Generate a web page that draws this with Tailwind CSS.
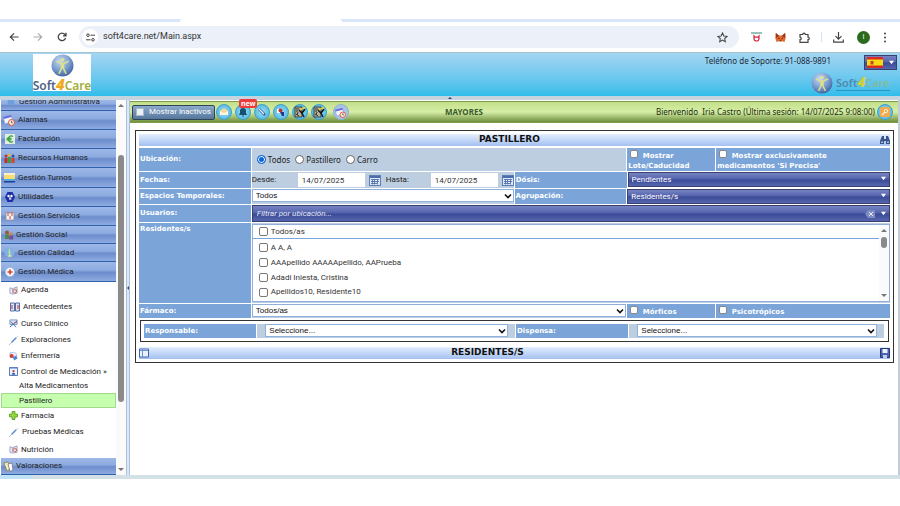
<!DOCTYPE html>
<html lang="es">
<head>
    <meta charset="UTF-8">
    <meta name="viewport" content="width=device-width, initial-scale=1.0">
    <title>Soft4Care - Pastillero</title>

    <!-- Tailwind CSS -->
    <script src="https://cdn.jsdelivr.net/npm/@tailwindcss/browser@4"></script>

    <style>
        /* Fuentes: menú y listas con Roboto, formulario con DejaVu Sans */
        body { font-family: Roboto, 'Open Sans', sans-serif; }
        .verdana { font-family: 'DejaVu Sans', sans-serif; }
        .noto { font-family: 'Noto Sans', sans-serif; }
        .arial { font-family: 'Liberation Sans', Arial, sans-serif; }
        /* Botones del menú lateral */
        .menu {
            background: linear-gradient(#9db8e8 0%, #8eabe0 42%, #6c8dcc 55%, #8fabe1 100%);
            border-bottom: 1px solid #2f62ad;
        }
        .titlebar { background: linear-gradient(#e4eefd, #c3d7f8 50%, #a3c0ef); }
        .combo {
            background: linear-gradient(#7583c2 0%, #5a69b0 40%, #3c4b97 55%, #5666b0 100%);
            border: 1px solid #39406b;
        }
        .tool {
            border: 1px solid #3f9fc4;
            background: radial-gradient(circle, #a8dcf4, #3bb0e0);
        }
    </style>
</head>
<body class="flex min-h-screen flex-col bg-white pt-[19px] text-[8px] text-[#222]">

    <!-- Iconos compartidos -->
    <svg class="absolute size-0">
        <defs>
            <radialGradient id="ball" cx=".4" cy=".3" r=".8">
                <stop offset="0" stop-color="#c9dcf2"/><stop offset=".6" stop-color="#6f94c8"/><stop offset="1" stop-color="#35518f"/>
            </radialGradient>
        </defs>
        <symbol id="chevron" viewBox="0 0 8 8"><path d="M1 2.500l3 3 3-3" fill="none" stroke="#111" stroke-width="1.600"/></symbol>
        <symbol id="calendar" viewBox="0 0 12 11">
            <rect x=".5" y=".5" width="11" height="10" fill="#dfe8f7" stroke="#5f7cb4"/>
            <path d="M1 2h10" stroke="#4c6cae" stroke-width="2"/>
            <path d="M2 4.500h8M2 6.500h8M2 8.500h6M3.500 4v5.500M5.500 4v5.500M8.500 4v5.500" stroke="#5670a6" stroke-width=".9"/>
        </symbol>
        <symbol id="card" viewBox="0 0 10 10">
            <path d="M1 2l3 .8L9 1v7l-5 1-3-1z" fill="#e6ecf8" stroke="#8290b4" stroke-width=".8"/>
            <path d="M4 3v5" stroke="#8290b4" stroke-width=".7"/>
            <circle cx="6.500" cy="5.500" r="2" fill="#fff" stroke="#d04a4a" stroke-width=".9"/>
            <path d="M6.500 4.500v1h1" fill="none" stroke="#444" stroke-width=".5"/>
        </symbol>
        <symbol id="alarm" viewBox="0 0 12 12">
            <path d="M0 3l8-2 2 6-8 3z" fill="#f4f6ff" stroke="#8c9ad8" stroke-width=".7"/>
            <path d="M0 3l8-2 .6 2L.7 5z" fill="#6a6fd8"/>
            <circle cx="8.500" cy="8.500" r="3" fill="#fde9dc" stroke="#d8583a" stroke-width="1"/>
            <path d="M8.500 6.800v1.900h1.300" fill="none" stroke="#333" stroke-width=".7"/>
        </symbol>
        <symbol id="needle" viewBox="0 0 10 10">
            <path d="M0 10l4-4" stroke="#8aa6c9" stroke-width=".8"/>
            <path d="M3 7l5-5" stroke="#5b8fd0" stroke-width="1.800"/>
            <path d="M8 2l1.700-1.700" stroke="#9cb8dc"/>
        </symbol>
        <symbol id="doctor" viewBox="0 0 12 12">
            <path d="M1 1h7v10H1z" fill="#b9b39a" stroke="#222" stroke-width=".8"/>
            <path d="M2 3h3M2 5h2M2 8l3 2M3 9l1-3" stroke="#222" stroke-width=".9"/>
            <path d="M5 4l3 3 3-4" fill="none" stroke="#111" stroke-width="1.500"/>
            <path d="M6 4l4-2.500 1 1" fill="none" stroke="#f2d52e" stroke-width="1.300"/>
            <path d="M8 7l2 4" stroke="#123" stroke-width="1.500"/>
        </symbol>
        <symbol id="globe" viewBox="0 0 22 22">
            <circle cx="11" cy="11" r="10.500" fill="url(#ball)"/>
            <circle cx="11" cy="5.500" r="1.700" fill="#dfe391"/>
            <path d="M5 7l4.500 2h3L17 7M10 9v5l-2.500 5M12 9v5l2.500 5M11 9v5" fill="none" stroke="#dbe08c" stroke-width="1.500"/>
        </symbol>
    </svg>

    <!-- Barra de pestañas del navegador -->
    <div class="flex h-[3px] bg-[#d9e5f8]">
        <div class="ml-[20%] h-[3px] w-[18%] rounded-t bg-white"></div>
    </div>

    <!-- Barra de direcciones -->
    <div class="flex h-[30px] items-center bg-white pl-[9px] pr-[13px]">
        <div class="flex w-[70px] items-center gap-[14px]">
            <button aria-label="Atrás"><svg class="size-[10px]" viewBox="0 0 10 10" fill="none" stroke="#444" stroke-width="1.200"><path d="M9.500 5H1.500M5 1.300L1.300 5 5 8.700"/></svg></button>
            <button aria-label="Adelante"><svg class="size-[10px]" viewBox="0 0 10 10" fill="none" stroke="#aaa" stroke-width="1.200"><path d="M.5 5h8M5 1.300L8.700 5 5 8.700"/></svg></button>
            <button aria-label="Recargar"><svg class="size-[10px]" viewBox="0 0 10 10" fill="none" stroke="#444" stroke-width="1.300"><path d="M8.500 6A3.700 3.700 0 1 1 7.800 2.500L9 3.700M9 .8v3H6"/></svg></button>
        </div>
        <div class="flex h-[22px] flex-1 items-center rounded-full bg-[#ebf0f9] pl-[3px] pr-[11px]">
            <span class="flex size-[16px] items-center justify-center rounded-full bg-white">
                <svg class="size-[9px]" viewBox="0 0 9 9" fill="none" stroke="#444" stroke-width="1"><circle cx="2" cy="2.200" r="1.300"/><path d="M4.500 2.200H9M0 6.800h4.500"/><circle cx="7" cy="6.800" r="1.300"/></svg>
            </span>
            <input type="text" aria-label="Dirección" value="soft4care.net/Main.aspx" class="ml-[5px] flex-1 bg-transparent text-[9px] text-[#333] outline-none">
            <button aria-label="Favorito"><svg class="size-[11px]" viewBox="0 0 12 12" fill="none" stroke="#444" stroke-width="1.100"><path d="M6 1l1.500 3.300 3.500.4-2.600 2.400.7 3.600L6 8.900l-3.100 1.800.7-3.600L1 4.700l3.500-.4z"/></svg></button>
        </div>
        <div class="ml-[12px] flex items-center gap-[13px]">
            <svg class="size-[11px]" viewBox="0 0 11 11"><path d="M0 1h11" stroke="#4f9a83" stroke-width="1.200"/><path d="M3 4v2.500a2.500 2.500 0 0 0 5 0V4l-1 1.200H4z" fill="#fff" stroke="#d4273e" stroke-width="1.200"/></svg>
            <svg class="size-[11px]" viewBox="0 0 11 11"><path d="M.5 1l4 2.500h2l4-2.500.2 5-1.200 4-3-1h-2l-3 1L.3 6z" fill="#e8682c"/><path d="M1 1l3 3-3 2zM10 1L7 4l3 2z" fill="#8a3a22"/><path d="M3 6l1.500.7M8 6l-1.500.7M4.500 9h2" stroke="#3a2018" stroke-width=".9"/></svg>
            <svg class="size-[11px]" viewBox="0 0 11 11" fill="none" stroke="#444" stroke-width="1.200"><path d="M1 2.500h2.700a1.300 1.300 0 0 1 2.600 0H9v2.700a1.200 1.200 0 0 1 0 2.500v2.700H1V7.700a1.200 1.200 0 0 0 0-2.500z"/></svg>
            <span class="-mx-[2px] h-[10px] w-px bg-[#d3e0f5]"></span>
            <svg class="size-[11px]" viewBox="0 0 11 11" fill="none" stroke="#444" stroke-width="1.200"><path d="M5.500 0v7M2.500 4.200l3 3 3-3M.7 7.500v2.700h9.600V7.500"/></svg>
            <span class="flex size-[13px] items-center justify-center rounded-full bg-[#2c6a1d] text-[7px] text-white">I</span>
            <svg class="h-[11px] w-[4px]" viewBox="0 0 4 11" fill="#444"><circle cx="2" cy="1.500" r="1"/><circle cx="2" cy="5.500" r="1"/><circle cx="2" cy="9.500" r="1"/></svg>
        </div>
    </div>

    <!-- Cabecera -->
    <header class="flex h-[44px] items-start justify-between border-t border-[#a9c3cf] bg-linear-to-b from-[#a3d5f3] to-[#2dbdea] pr-[3px]">
        <div class="ml-[33px] mt-px flex h-[37px] w-[58px] flex-col items-center bg-white">
            <svg class="size-[23px] shrink-0"><use href="#globe"/></svg>
            <span class="noto flex items-baseline text-[12px] leading-[14px] font-semibold text-[#4f6286]">Soft<b class="text-[15px] leading-[14px] italic text-[#f0a81e]">4</b><span class="text-[#a3ad3b]">Care</span></span>
        </div>
        <div class="flex flex-col items-end">
            <div class="flex items-start gap-[33px]">
                <span class="noto pt-[2px] text-[8px] leading-[12px] text-[#1c2a33]">Teléfono de Soporte: 91-088-9891</span>
                <button aria-label="Idioma" class="combo mt-[2px] flex h-[15px] w-[33px] items-center justify-between px-[2px]">
                    <svg class="h-[11px] w-[16px]" viewBox="0 0 16 11"><path d="M0 0h16v11H0z" fill="#d82c20"/><path d="M0 2.500h16v6H0z" fill="#fbd912"/><path d="M3.500 4h3v3.500h-3z" fill="#c0492a"/></svg>
                    <svg class="size-[5px]" viewBox="0 0 6 6"><path d="M0 1h6L3 5z" fill="#fff"/></svg>
                </button>
            </div>
            <div class="mt-[2px] mr-[7px] flex items-center gap-[3px]">
                <svg class="size-[22px]"><use href="#globe"/></svg>
                <span class="noto flex items-baseline border-b border-[#2a92c4] text-[11px] leading-[14px] font-semibold text-[#5586ae]">Soft<b class="text-[14px] leading-[14px] italic text-[#d6cf3a]">4</b><span class="text-[#86bb9c]">Care</span></span>
            </div>
        </div>
    </header>
    <div class="flex h-[4px] items-center justify-center bg-[#c5d5df]">
        <svg class="h-[2px] w-[4px]" viewBox="0 0 4 2"><path d="M0 2l2-2 2 2z" fill="#26466e"/></svg>
    </div>

    <div class="flex border-r-2 border-[#c3cdd8]">
        <!-- Menú lateral -->
        <nav class="ml-px flex w-[115px] shrink-0 flex-col">
            <a href="#" class="menu flex h-[11px] items-end gap-[4px] overflow-hidden pl-[6px]"><svg class="mb-[4px] size-[8px]" viewBox="0 0 8 8"><circle cx="4" cy="4" r="3.500" fill="#6ea0dd"/></svg><span class="mb-[3px] leading-[11px]">Gestión Administrativa</span></a>
            <a href="#" class="menu flex h-[19px] items-center gap-[3px] pl-[2px]"><svg class="size-[12px]"><use href="#alarm"/></svg>Alarmas</a>
            <a href="#" class="menu flex h-[19px] items-center gap-[3px] pl-[4px]"><svg class="size-[10px]" viewBox="0 0 10 10"><path d="M0 0h10v10H0z" fill="#dff0df"/><path d="M8 2.500A3 3 0 1 0 8 7.500M1.500 4.300h5M1.500 5.800h5" fill="none" stroke="#3a9e40" stroke-width="1.300"/></svg>Facturación</a>
            <a href="#" class="menu flex h-[19px] items-center gap-[3px] pl-[3px]"><svg class="size-[11px]" viewBox="0 0 11 11"><circle cx="2" cy="3" r="1.500" fill="#c52f25"/><path d="M.5 5h3v5h-3z" fill="#c52f25"/><circle cx="5.500" cy="2" r="1.500" fill="#e8b62b"/><path d="M4 4h3v6H4z" fill="#3d9a45"/><circle cx="9" cy="3" r="1.500" fill="#2a4fa8"/><path d="M7.500 5h3v5h-3z" fill="#d2452c"/></svg>Recursos Humanos</a>
            <a href="#" class="menu flex h-[20px] items-center gap-[3px] pl-[3px]"><svg class="size-[11px]" viewBox="0 0 11 11"><path d="M0 1h11v6H0z" fill="#f7dc74"/><path d="M0 1h11v2H0z" fill="#f9efcb"/><path d="M0 7h11v1.500H0z" fill="#4bb1da"/><path d="M0 9h11v1.500H0z" fill="#1f3f9a"/></svg>Gestión Turnos</a>
            <a href="#" class="menu flex h-[19px] items-center gap-[3px] pl-[4px]"><svg class="size-[10px]" viewBox="0 0 10 10"><path d="M2.500 0h5L10 5l-2.500 5h-5L0 5z" fill="#1d2fa6"/><circle cx="3.500" cy="4" r="1.200" fill="#fff"/><circle cx="6.500" cy="4" r="1.200" fill="#fff"/><path d="M4 7h2.500M5 5v2" stroke="#fff" stroke-width="1.100"/></svg>Utilidades</a>
            <a href="#" class="menu flex h-[19px] items-center gap-[3px] pl-[4px]"><svg class="size-[10px]" viewBox="0 0 10 10"><path d="M1 1l3 1h2l3-1v8H1z" fill="#f3f0f0" stroke="#8d8d9d" stroke-width=".8"/><path d="M3 1v4M7 1v4M5 5v3" stroke="#d04a3f"/></svg>Gestión Servicios</a>
            <a href="#" class="menu flex h-[18px] items-center gap-[2px] pl-[3px]"><svg class="size-[10px]" viewBox="0 0 10 10"><circle cx="3" cy="2.500" r="2" fill="#9c5a34"/><path d="M1 4.500h4V9H1z" fill="#4d8a4a"/><circle cx="7" cy="4" r="1.800" fill="#c98a52"/><path d="M5.200 5.500h4V9.500h-4z" fill="#7d4a9b"/></svg>Gestión Social</a>
            <a href="#" class="menu flex h-[18px] items-center gap-[3px] pl-[3px]"><svg class="size-[11px]" viewBox="0 0 11 11"><circle cx="5.500" cy="5.500" r="5" fill="#7fb2e0"/><path d="M5.500 2v1.500M4.500 5h1.200v4M4 9h3.500" fill="none" stroke="#d9e59a" stroke-width="1.300"/></svg>Gestión Calidad</a>
            <a href="#" class="menu flex h-[20px] items-center gap-[3px] pl-[4px]"><svg class="size-[10px]" viewBox="0 0 10 10"><circle cx="5" cy="5" r="4.600" fill="#f4f8fd" stroke="#9bb6da" stroke-width=".7"/><path d="M5 2.500v5M2.500 5h5" stroke="#d8442f" stroke-width="1.600"/></svg>Gestión Médica</a>

            <!-- Submenú de Gestión Médica -->
            <a href="#" class="flex h-[16px] items-center gap-[3px] pl-[8px]"><svg class="size-[9px]"><use href="#card"/></svg>Agenda</a>
            <a href="#" class="flex h-[17px] items-center gap-[3px] pl-[9px]"><svg class="size-[10px]" viewBox="0 0 10 10"><path d="M.5 1h4v8h-4zM5.500 1h4v8h-4z" fill="#dfe7f6" stroke="#44609c" stroke-width=".9"/><path d="M2 3v4M8 3v4" stroke="#c8443e" stroke-width="1.100"/></svg>Antecedentes</a>
            <a href="#" class="flex h-[17px] items-center gap-[3px] pl-[8px]"><svg class="size-[9px]" viewBox="0 0 10 10"><path d="M1 1h8v5H1z" fill="#d8e4f5" stroke="#5a7cb6" stroke-width=".8"/><path d="M1 9l8-7M2 3l6 6" stroke="#4469a8" stroke-width="1.100"/><path d="M6 4h3" stroke="#c95a4a"/></svg>Curso Clínico</a>
            <a href="#" class="flex h-[16px] items-center gap-[3px] pl-[8px]"><svg class="size-[9px]"><use href="#needle"/></svg>Exploraciones</a>
            <a href="#" class="flex h-[16px] items-center gap-[3px] pl-[8px]"><svg class="size-[9px]" viewBox="0 0 10 10"><path d="M1 1l5-1 3 3-2 3H1z" fill="#e9eefa" stroke="#8ea3d0" stroke-width=".7"/><circle cx="3" cy="4.500" r="2.200" fill="#d83a34"/><path d="M4 6l4-2 1.500 3L6 9.500z" fill="#4f86d2"/></svg>Enfermería</a>
            <a href="#" class="flex h-[15px] items-center gap-[3px] pl-[8px]"><svg class="size-[9px]" viewBox="0 0 10 10"><path d="M.5.500h9v9h-9z" fill="#edf3fc" stroke="#3f67b0"/><path d="M1 1.500h8" stroke="#7fa3dc"/><circle cx="5" cy="4.500" r="1.300" fill="#c0463e"/><path d="M3 8.500a2 2 0 0 1 4 0z" fill="#355ca5"/></svg>Control de Medicación »</a>
            <a href="#" class="flex h-[14px] items-center pl-[18px]">Alta Medicamentos</a>
            <a href="#" class="flex h-[15px] items-center border border-[#9fdc8c] bg-[#c6ffae] pl-[17px]">Pastillero</a>
            <a href="#" class="flex h-[15px] items-center gap-[3px] pl-[8px]"><svg class="size-[9px]" viewBox="0 0 10 10"><path d="M3.500.500h3v3h3v3h-3v3h-3v-3h-3v-3h3z" fill="#9bdc3c" stroke="#4e9a1c"/></svg>Farmacia</a>
            <a href="#" class="flex h-[18px] items-center gap-[4px] pl-[8px]"><svg class="size-[9px]"><use href="#needle"/></svg>Pruebas Médicas</a>
            <a href="#" class="flex h-[17px] items-center gap-[3px] pl-[8px]"><svg class="size-[9px]"><use href="#card"/></svg>Nutrición</a>
            <a href="#" class="menu flex h-[17px] items-center gap-[2px] pl-[2px]"><svg class="size-[11px]" viewBox="0 0 11 11"><path d="M1 2l4-1 2 7-3 2z" fill="#f4eecb" stroke="#87803a" stroke-width=".8"/><path d="M5 3l4-1 1 7-3 1.500z" fill="#fff" stroke="#777" stroke-width=".8"/></svg>Valoraciones</a>
        </nav>

        <!-- Barra de desplazamiento del menú -->
        <div class="flex w-[10px] shrink-0 flex-col items-center bg-[#fafafa] py-[4px]">
            <svg class="h-[3px] w-[6px]" viewBox="0 0 6 3"><path d="M0 3l3-3 3 3z" fill="#777"/></svg>
            <div class="mt-[48px] h-[247px] w-[6px] rounded-full bg-[#8a8a8a]"></div>
            <svg class="mt-auto h-[3px] w-[6px]" viewBox="0 0 6 3"><path d="M0 0l3 3 3-3z" fill="#777"/></svg>
        </div>
        <div class="flex w-[4px] shrink-0 items-center border-x border-[#a9c0dc] bg-[#dbe7f5]">
            <svg class="h-[4px] w-[2px]" viewBox="0 0 2 4"><path d="M2 0L0 2l2 2z" fill="#26466e"/></svg>
        </div>

        <!-- Contenido -->
        <div class="min-w-0 flex-1 pt-px">
            <div class="noto relative flex h-[22px] items-center border-y border-[#7d9b48] bg-linear-to-b from-[#c3e08a] via-[#d6eea6] to-[#6f8f3c] pl-[2px] pr-[5px]">
                <label class="flex h-[15px] items-center gap-[5px] rounded-xs border border-[#2d4358] bg-linear-to-b from-[#8caacb] to-[#56779c] px-[3px] font-[Roboto] text-[8px] text-white">
                    <input type="checkbox" class="size-[8px] appearance-none border border-[#a8b8c8] bg-[#eaf0f6]">Mostrar inactivos
                </label>
                <div class="ml-px flex gap-[3px]">
                    <button aria-label="Mensajes" class="tool flex size-[16px] items-center justify-center rounded-full"><svg class="size-[10px]" viewBox="0 0 10 10"><path d="M1 4h8v4H1z" fill="#fff6dc"/><path d="M1 4l4-3 4 3-4 2z" fill="#f3d9a0"/></svg></button>
                    <button aria-label="Avisos" class="tool relative flex size-[16px] items-center justify-center rounded-full"><svg class="size-[10px]" viewBox="0 0 10 10"><path d="M5 1a3 3 0 0 1 3 3v2l1 2H1l1-2V4a3 3 0 0 1 3-3zM4 8.500h2v1H4z" fill="#17506e"/></svg>
                        <span class="absolute -top-[6px] left-[3px] rounded-xs bg-[#ee3a3a] px-[2px] text-[7px] leading-[9px] font-bold text-white">new</span></button>
                    <button aria-label="Pruebas" class="tool flex size-[16px] items-center justify-center rounded-full"><svg class="size-[10px]" viewBox="0 0 10 10"><path d="M2 2l6 6" stroke="#1b5f98" stroke-width="2.500"/><path d="M2 2l5 5" stroke="#e8f5fd" stroke-width="1.300"/></svg></button>
                    <button aria-label="Usuario" class="tool flex size-[16px] items-center justify-center rounded-full"><svg class="size-[10px]" viewBox="0 0 10 10"><path d="M1 2h5v4H1z" fill="#fff"/><circle cx="4.500" cy="3.500" r="2" fill="#b23a2f"/><path d="M4 5h4v4H6z" fill="#26368a"/></svg></button>
                    <button aria-label="Médico" class="tool flex size-[16px] items-center justify-center rounded-full"><svg class="size-[12px]"><use href="#doctor"/></svg></button>
                    <button aria-label="Consulta" class="tool flex size-[16px] items-center justify-center rounded-full"><svg class="size-[12px]"><use href="#doctor"/></svg></button>
                    <button aria-label="Alarmas" class="ml-[3px] flex size-[16px] items-center justify-center rounded-full border border-[#8cb0cf] bg-[#a9c4e4]"><svg class="size-[11px]"><use href="#alarm"/></svg></button>
                </div>
                <strong class="absolute left-[41%] text-[8px] text-[#3a5a2c]">MAYORES</strong>
                <span class="ml-auto text-[8px] whitespace-pre text-[#202b12]">Bienvenido  Iria Castro (Última sesión: 14/07/2025 9:08:00)</span>
                <button aria-label="Cambiar clave" class="tool ml-[2px] flex size-[16px] items-center justify-center rounded-full"><svg class="size-[10px]" viewBox="0 0 10 10"><rect width="10" height="10" rx="1.500" fill="#f3a94c"/><circle cx="6" cy="4" r="1.700" fill="none" stroke="#fff1d6"/><path d="M5 5L2 8" stroke="#fff1d6" stroke-width="1.200"/></svg></button>
            </div>

            <!-- Panel Pastillero -->
            <main class="verdana mt-[7px] mr-[4px] ml-[5px] border border-[#333] px-[3px] pt-[3px] pb-[3px] text-[7px] font-bold text-white">
                <div class="titlebar flex h-[12px] items-center text-[9px] text-[#111]">
                    <h1 class="flex-1 text-center">PASTILLERO</h1>
                    <button aria-label="Buscar"><svg class="size-[10px]" viewBox="0 0 10 10" fill="#3a5488"><path d="M2 1h2v3h2V1h2l2 5v3H6V6H4v3H0V6z"/><path d="M1 6.500h2v1.500H1zM7 6.500h2v1.500H7z" fill="#a9c0e4"/></svg></button>
                </div>

                <form class="mt-[2px] flex flex-col gap-px">
                    <div class="grid h-[23px] grid-cols-[112fr_375fr_88fr_174fr] gap-px">
                        <span class="flex items-center bg-[#7ba4d9] pl-[1px]">Ubicación:</span>
                        <div class="noto flex items-center gap-[5px] bg-[#bccee0] pl-[5px] text-[8px] font-normal text-[#222]">
                            <label class="flex items-center gap-[2px]"><input type="radio" name="ubicacion" checked class="size-[9px] appearance-none rounded-full border border-[#666] bg-white checked:border-[#0b66d8] checked:bg-[#0b66d8] checked:shadow-[inset_0_0_0_1px_white]">Todos</label>
                            <label class="flex items-center gap-[2px]"><input type="radio" name="ubicacion" class="size-[9px] appearance-none rounded-full border border-[#666] bg-white checked:bg-[#0b66d8]">Pastillero</label>
                            <label class="flex items-center gap-[2px]"><input type="radio" name="ubicacion" class="size-[9px] appearance-none rounded-full border border-[#666] bg-white checked:bg-[#0b66d8]">Carro</label>
                        </div>
                        <label class="bg-[#7ba4d9] pt-[2px] pl-[1px] leading-[10px]"><input type="checkbox" class="mx-[2px] size-[8px] appearance-none rounded-xs border border-[#888] bg-white checked:bg-[#0b66d8]"> Mostrar<br>Lote/Caducidad</label>
                        <label class="bg-[#7ba4d9] pt-[2px] pl-[1px] leading-[10px]"><input type="checkbox" class="mx-[2px] size-[8px] appearance-none rounded-xs border border-[#888] bg-white checked:bg-[#0b66d8]"> Mostrar exclusivamente<br>medicamentos 'Si Precisa'</label>
                    </div>

                    <div class="grid h-[16px] grid-cols-[112fr_262fr_112fr_263fr] gap-px">
                        <span class="flex items-center bg-[#7ba4d9] pl-[1px]">Fechas:</span>
                        <div class="flex items-center bg-[#bccee0] font-[Roboto] text-[8px] font-normal text-[#222]">
                            <label for="desde" class="w-[46px]">Desde:</label>
                            <input id="desde" type="text" value="14/07/2025" class="h-[14px] w-[67px] bg-white px-[4px] text-[#333]">
                            <svg class="ml-[4px] h-[11px] w-[12px]"><use href="#calendar"/></svg>
                            <label for="hasta" class="ml-[5px] w-[45px]">Hasta:</label>
                            <input id="hasta" type="text" value="14/07/2025" class="h-[14px] w-[67px] bg-white px-[4px] text-[#333]">
                            <svg class="ml-[4px] h-[11px] w-[12px]"><use href="#calendar"/></svg>
                        </div>
                        <label for="dosis" class="flex items-center bg-[#7ba4d9] pl-[1px]">Dósis:</label>
                        <div class="relative">
                            <select id="dosis" class="combo h-[15px] w-full appearance-none pl-[3px] font-[Roboto] text-[8px] font-normal"><option>Pendientes</option></select>
                            <svg class="pointer-events-none absolute top-[4px] right-[4px] size-[5px]" viewBox="0 0 6 6"><path d="M0 1h6L3 5z" fill="#fff"/></svg>
                        </div>
                    </div>

                    <div class="grid h-[15px] grid-cols-[112fr_262fr_112fr_263fr] gap-px">
                        <label for="espacios" class="flex items-center bg-[#7ba4d9] pl-[1px]">Espacios Temporales:</label>
                        <div class="relative bg-[#bccee0]">
                            <select id="espacios" class="arial h-[13px] w-full appearance-none border border-[#8fb0dc] bg-white pl-[3px] text-[8px] font-normal text-[#111]"><option>Todos</option></select>
                            <svg class="pointer-events-none absolute top-[3px] right-[2px] size-[8px]"><use href="#chevron"/></svg>
                        </div>
                        <label for="agrupacion" class="flex items-center bg-[#7ba4d9] pl-[1px]">Agrupación:</label>
                        <div class="relative">
                            <select id="agrupacion" class="combo h-[15px] w-full appearance-none pl-[3px] font-[Roboto] text-[8px] font-normal"><option>Residentes/s</option></select>
                            <svg class="pointer-events-none absolute top-[4px] right-[4px] size-[5px]" viewBox="0 0 6 6"><path d="M0 1h6L3 5z" fill="#fff"/></svg>
                        </div>
                    </div>

                    <div class="grid h-[17px] grid-cols-[112fr_639fr] gap-px">
                        <label for="usuarios" class="flex items-center bg-[#7ba4d9] pl-[1px]">Usuarios:</label>
                        <div class="relative">
                            <input id="usuarios" type="text" placeholder="Filtrar por ubicación..." class="combo h-[17px] w-full pl-[4px] font-[Roboto] text-[8px] font-normal italic placeholder:text-[#e3e7f6]">
                            <svg class="absolute top-[5px] right-[15px] h-[8px] w-[10px]" viewBox="0 0 10 8"><path d="M3 0h7v8H3L0 4z" fill="#7f8cc4"/><path d="M4 2l4 4M8 2L4 6" stroke="#e8ecf8"/></svg>
                            <svg class="absolute top-[6px] right-[4px] size-[5px]" viewBox="0 0 6 6"><path d="M0 1h6L3 5z" fill="#fff"/></svg>
                        </div>
                    </div>

                    <div class="grid grid-cols-[112fr_639fr] gap-px">
                        <span class="bg-[#7ba4d9] pt-[1px] pl-[1px] leading-[10px]">Residentes/s</span>
                        <div class="bg-[#bccee0] py-px">
                            <div class="flex border border-[#8fb0dc] bg-white font-[Roboto] text-[8px] font-normal text-[#333]">
                                <ul class="flex-1 pb-[2px]">
                                    <li class="mb-px flex h-[14px] items-center border-b border-[#7ba4d9]"><label class="flex items-center gap-[3px] pl-[6px]"><input type="checkbox" class="size-[9px] appearance-none rounded-xs border border-[#777] bg-white checked:bg-[#0b66d8]">Todos/as</label></li>
                                    <li class="flex h-[15px] items-center"><label class="flex items-center gap-[3px] pl-[6px]"><input type="checkbox" class="size-[9px] appearance-none rounded-xs border border-[#777] bg-white checked:bg-[#0b66d8]">A A, A</label></li>
                                    <li class="flex h-[15px] items-center"><label class="flex items-center gap-[3px] pl-[6px]"><input type="checkbox" class="size-[9px] appearance-none rounded-xs border border-[#777] bg-white checked:bg-[#0b66d8]">AAApellido AAAAApellido, AAPrueba</label></li>
                                    <li class="flex h-[15px] items-center"><label class="flex items-center gap-[3px] pl-[6px]"><input type="checkbox" class="size-[9px] appearance-none rounded-xs border border-[#777] bg-white checked:bg-[#0b66d8]">Adadi Iniesta, Cristina</label></li>
                                    <li class="flex h-[14px] items-center"><label class="flex items-center gap-[3px] pl-[6px]"><input type="checkbox" class="size-[9px] appearance-none rounded-xs border border-[#777] bg-white checked:bg-[#0b66d8]">Apellidos10, Residente10</label></li>
                                </ul>
                                <div class="flex w-[10px] flex-col items-center bg-[#fafafa] py-[4px]">
                                    <svg class="h-[3px] w-[6px]" viewBox="0 0 6 3"><path d="M0 3l3-3 3 3z" fill="#777"/></svg>
                                    <div class="mt-[5px] h-[11px] w-[6px] rounded-full bg-[#8a8a8a]"></div>
                                    <svg class="mt-auto h-[3px] w-[6px]" viewBox="0 0 6 3"><path d="M0 0l3 3 3-3z" fill="#777"/></svg>
                                </div>
                            </div>
                        </div>
                    </div>

                    <div class="grid h-[14px] grid-cols-[112fr_375fr_88fr_174fr] gap-px">
                        <label for="farmaco" class="flex items-center bg-[#7ba4d9] pl-[1px]">Fármaco:</label>
                        <div class="relative bg-[#bccee0]">
                            <select id="farmaco" class="arial h-[13px] w-full appearance-none border border-[#8fb0dc] bg-white pl-[3px] text-[8px] font-normal text-[#111]"><option>Todos/as</option></select>
                            <svg class="pointer-events-none absolute top-[3px] right-[2px] size-[8px]"><use href="#chevron"/></svg>
                        </div>
                        <label class="bg-[#7ba4d9] pt-[2px] pl-[1px] leading-[10px]"><input type="checkbox" class="mx-[2px] size-[8px] appearance-none rounded-xs border border-[#888] bg-white checked:bg-[#0b66d8]"> Mórficos</label>
                        <label class="bg-[#7ba4d9] pt-[2px] pl-[1px] leading-[10px]"><input type="checkbox" class="mx-[2px] size-[8px] appearance-none rounded-xs border border-[#888] bg-white checked:bg-[#0b66d8]"> Psicotrópicos</label>
                    </div>

                    <div class="mx-[1px] mt-[1px] grid h-[22px] grid-cols-[112fr_257fr_112fr_254fr] gap-px border border-[#333] py-[3px] pr-[4px] pl-[3px]">
                        <label for="responsable" class="flex items-center bg-[#7ba4d9] pl-[1px]">Responsable:</label>
                        <div class="bg-[#bccee0] pr-[7px] pl-[8px]"><div class="relative">
                            <select id="responsable" class="arial h-[13px] w-full appearance-none border border-[#8fb0dc] bg-white pl-[3px] text-[8px] font-normal text-[#111]"><option>Seleccione...</option></select>
                            <svg class="pointer-events-none absolute top-[3px] right-[2px] size-[8px]"><use href="#chevron"/></svg>
                        </div></div>
                        <label for="dispensa" class="flex items-center bg-[#7ba4d9] pl-[1px]">Dispensa:</label>
                        <div class="bg-[#bccee0] pr-[7px] pl-[8px]"><div class="relative">
                            <select id="dispensa" class="arial h-[13px] w-full appearance-none border border-[#8fb0dc] bg-white pl-[3px] text-[8px] font-normal text-[#111]"><option>Seleccione...</option></select>
                            <svg class="pointer-events-none absolute top-[3px] right-[2px] size-[8px]"><use href="#chevron"/></svg>
                        </div></div>
                    </div>
                </form>

                <div class="titlebar mt-[5px] flex h-[12px] items-center text-[9px] text-[#111]">
                    <button aria-label="Columnas"><svg class="size-[10px]" viewBox="0 0 10 10"><path d="M.5 1h9v8h-9z" fill="#eaf1fd" stroke="#3f67b0"/><path d="M1 2.500h8M3.500 1v8" stroke="#6d92d0"/></svg></button>
                    <h2 class="flex-1 pr-[54px] text-center">RESIDENTES/S</h2>
                    <button aria-label="Guardar"><svg class="size-[10px]" viewBox="0 0 10 10"><path d="M.5.500h9v9h-9z" fill="#4a62b0" stroke="#26387c"/><path d="M2.500 1h5v4h-5z" fill="#eef2fb"/><path d="M3 7h4v3H3z" fill="#c6cfe8"/></svg></button>
                </div>
            </main>
        </div>
    </div>

    <!-- Borde inferior de la ventana -->
    <div class="h-[4px] bg-[#d3e1e6]"><div class="h-full w-[32px] bg-[#bfe3f5]"></div></div>

</body>
</html>
